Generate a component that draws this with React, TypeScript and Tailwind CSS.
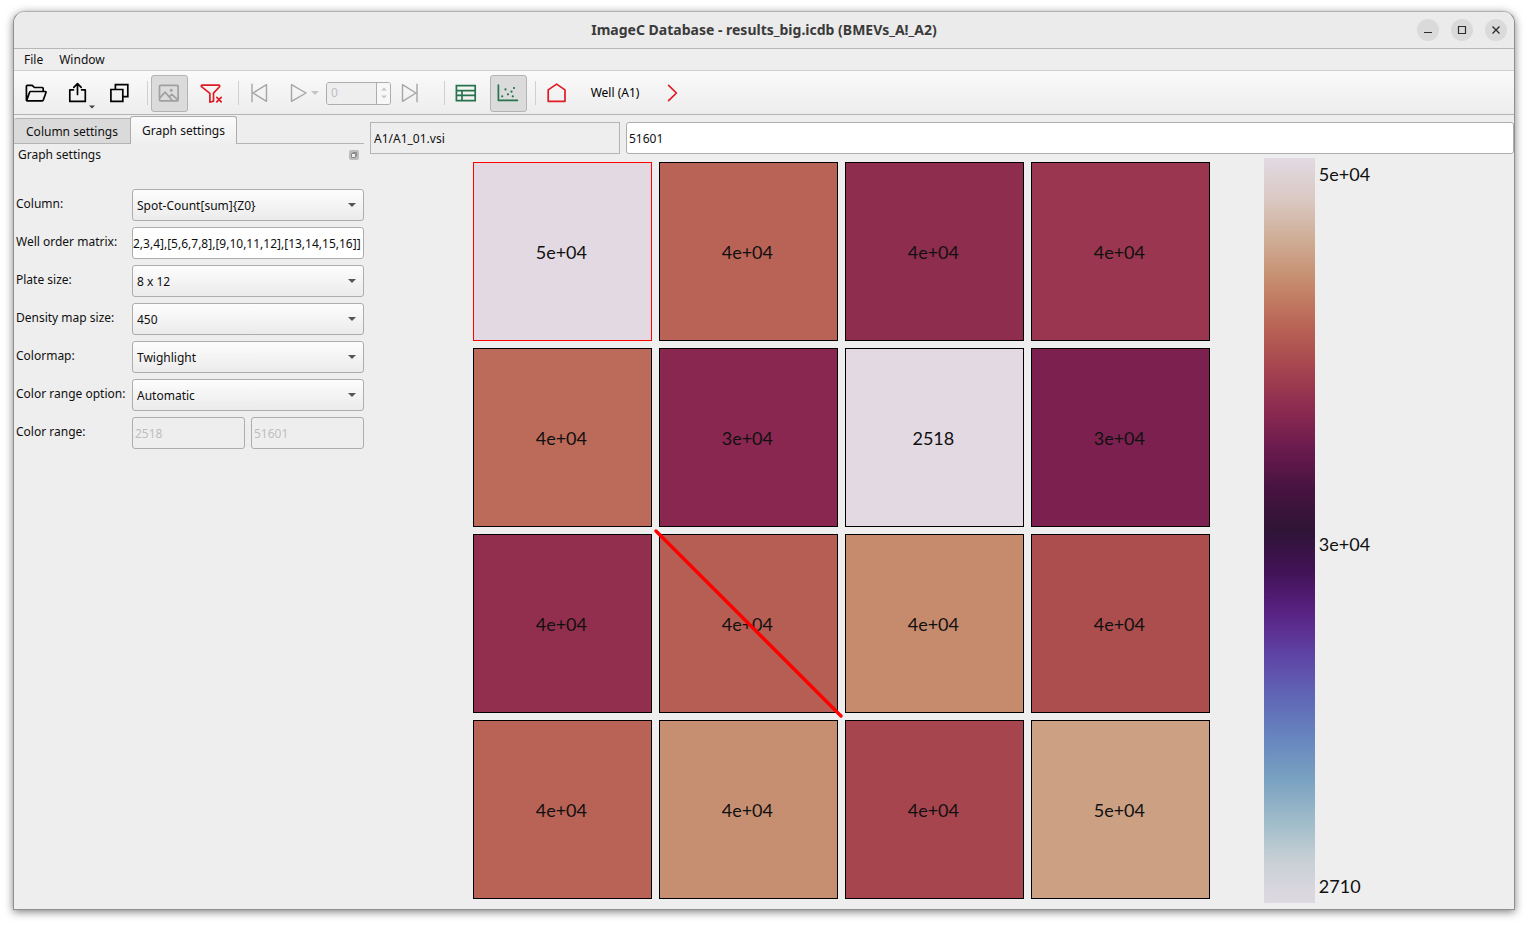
import React, { useEffect, useRef, useState } from 'react';

type Well = { value: string; color: string; selected?: boolean; excluded?: boolean };

const wells: Well[] = [
  { value: '5e+04', color: '#e2d9e2', selected: true },
  { value: '4e+04', color: '#b96256' },
  { value: '4e+04', color: '#8f2d4f' },
  { value: '4e+04', color: '#9a364f' },
  { value: '4e+04', color: '#bc6a59' },
  { value: '3e+04', color: '#892751' },
  { value: '2518', color: '#e2d9e2' },
  { value: '3e+04', color: '#7c204f' },
  { value: '4e+04', color: '#922f4f' },
  { value: '4e+04', color: '#b65e53', excluded: true },
  { value: '4e+04', color: '#c68a6d' },
  { value: '4e+04', color: '#ac4d4e' },
  { value: '4e+04', color: '#b96256' },
  { value: '4e+04', color: '#c68f71' },
  { value: '4e+04', color: '#a7454f' },
  { value: '5e+04', color: '#cba083' },
];

const twilight = [
  '#e2d9e2', '#dac9c3', '#ceac94', '#c68b6d', '#ba6657', '#a8474f', '#8e2c50', '#6b1b4e', '#471340',
  '#2f1436', '#421257', '#592384', '#5e43a5', '#6066b6', '#6785be', '#79a1c1', '#9ebbc9', '#c8d0d6', '#dfd9e1',
];

function Icon({ children }: { children: React.ReactNode }) {
  return (
    <svg
      viewBox="0 0 24 24"
      className="size-6 shrink-0"
      fill="none"
      stroke="currentColor"
      strokeWidth="1.7"
      strokeLinecap="round"
      strokeLinejoin="round"
      aria-hidden="true"
    >
      {children}
    </svg>
  );
}

function Caret({ className = '' }: { className?: string }) {
  return (
    <svg viewBox="0 0 8 4" className={`h-1 w-2 shrink-0 ${className}`} fill="currentColor" aria-hidden="true">
      <path d="M0 0h8L4 4z" />
    </svg>
  );
}

function ToolButton({
  label, active, disabled, className = '', children,
}: { label: string; active?: boolean; disabled?: boolean; className?: string; children: React.ReactNode }) {
  return (
    <button
      type="button"
      aria-label={label}
      disabled={disabled}
      className={`relative flex size-[37px] items-center justify-center rounded-[3px] border pr-[1px] pb-[1px] ${
        active ? 'border-[#b4b4b4] bg-[#dbdbdb]' : 'border-transparent'
      } ${className}`}
    >
      {children}
    </button>
  );
}

function Toolbar() {
  const group = 'flex items-center gap-[5px]';
  const next = `${group} ml-2 before:-mr-[2px] before:h-6 before:w-px before:bg-[#d0d0d0]`;
  return (
    <div className="flex h-11 items-center border-b border-[#b4b4b4] bg-linear-to-b from-[#fafafa] to-[#ededed] pt-[1px] pl-1 text-black">
      <div className={group}>
        <ToolButton label="Open">
          <Icon>
            <path d="M2.4 19V5.3a1 1 0 0 1 1-1h4.8l2.2 2.2h7.8a1 1 0 0 1 1 1v2.8M2.6 19.6l3-8.3a1.2 1.2 0 0 1 1.1-.8h14.6a.7.7 0 0 1 .7 1l-2.7 7.5a1.2 1.2 0 0 1-1.1.8H3.1" />
          </Icon>
        </ToolButton>
        <ToolButton label="Export">
          <Icon>
            <path d="M7.5 8.8H3.8v11.6h15.5V8.8h-3.7M11.5 13.5V2.8M7.8 6.3l3.7-3.6 3.7 3.6" />
          </Icon>
          <Caret className="absolute right-[1px] bottom-[2px] w-[6px] text-[#404040]" />
        </ToolButton>
        <ToolButton label="Windows">
          <Icon>
            <path strokeLinejoin="miter" d="M7.4 8.5V3.6h12.4v12h-4.9M2.9 8.5h11.9v11.9H2.9z" />
          </Icon>
        </ToolButton>
      </div>
      <div className={next}>
        <ToolButton label="Show image" active disabled className="text-[#a0a0a0]">
          <Icon>
            <rect x="2.5" y="4.4" width="18.6" height="15.4" rx=".8" />
            <path d="m2.8 16.8 5.4-5.6 7 8.2M12.2 15.8l2.6-2.4 5.8 5.2" />
            <circle cx="14.2" cy="9.2" r=".7" />
          </Icon>
        </ToolButton>
        <ToolButton label="Clear filter" className="text-[#e01b24]">
          <Icon>
            <path d="M3.2 4.2h16.6a.9.9 0 0 1 .7 1.5l-6 6.5v8l-3.6.9V12.3L2.5 5.7a.9.9 0 0 1 .7-1.5zM17.8 16.4l4.4 4.4M22.2 16.4l-4.4 4.4" />
          </Icon>
        </ToolButton>
      </div>
      <div className={next}>
        <ToolButton label="First" disabled className="text-[#a6a6a6]">
          <Icon>
            <path strokeWidth="1.4" d="M4 3.2v17.6M18.5 3.7v16.6L5 12z" />
          </Icon>
        </ToolButton>
        <ToolButton label="Play" disabled className="gap-[1px] text-[#a6a6a6]">
          <Icon>
            <path strokeWidth="1.4" d="M5.5 3.7v16.6L20 12z" />
          </Icon>
          <Caret className="text-[#c4c4c4]" />
        </ToolButton>
        <div className="flex h-[23px] w-[65px] overflow-hidden rounded-[3px] border border-[#adadad]">
          <input
            aria-label="Frame"
            disabled
            defaultValue="0"
            className="min-w-0 flex-1 border-r border-[#adadad] bg-[#eeeeee] px-1 text-[12px] text-[#bebebe]"
          />
          <div className="flex w-[13px] flex-col items-center justify-center gap-1 bg-[#f7f7f7] text-[#c8c8c8]">
            <Caret className="w-[6px] rotate-180" />
            <Caret className="w-[6px]" />
          </div>
        </div>
        <ToolButton label="Last" disabled className="-ml-1 text-[#a6a6a6]">
          <Icon>
            <path strokeWidth="1.4" d="M19 3.2v17.6M4.5 3.7v16.6L18 12z" />
          </Icon>
        </ToolButton>
      </div>
      <div className={`${next} pl-[7px]`}>
        <ToolButton label="Table view" className="text-[#26734d]">
          <Icon>
            <path strokeLinejoin="miter" d="M2.4 4.7h18.8v15H2.4zM2.4 9.6h18.8M2.4 14.4h18.8M8 9.6v10" />
          </Icon>
        </ToolButton>
        <ToolButton label="Graph view" active className="text-[#26734d]">
          <Icon>
            <path d="M2.4 4v15.4h19" />
            <g fill="currentColor" stroke="none">
              <circle cx="6.2" cy="15.3" r="1.1" />
              <circle cx="9.5" cy="8.4" r="1.1" />
              <circle cx="12" cy="13.3" r="1.1" />
              <circle cx="15.5" cy="10.7" r="1.1" />
              <circle cx="18" cy="7" r="1.1" />
              <circle cx="16.8" cy="15.3" r="1.1" />
            </g>
          </Icon>
        </ToolButton>
      </div>
      <div className={next}>
        <ToolButton label="Home" className="text-[#e01b24]">
          <Icon>
            <path d="M3.2 8.9 11.6 3.1 20 8.9v11.4H3.2z" />
          </Icon>
        </ToolButton>
        <button type="button" className="h-[37px] w-[68px] text-center whitespace-nowrap">Well (A1)</button>
        <ToolButton label="Next" className="text-[#e01b24]">
          <Icon>
            <path d="m8.6 4.4 7.8 7.6-7.8 7.6" />
          </Icon>
        </ToolButton>
      </div>
    </div>
  );
}

const fieldBox = 'h-8 w-full rounded-[3px] border border-[#adadad] pt-[1px]';

function Row({ id, label, children }: { id: string; label: string; children: React.ReactNode }) {
  return (
    <div className="flex h-8">
      <label htmlFor={id} className="w-[116px] shrink-0 pt-[5px] leading-5 whitespace-nowrap">{label}</label>
      <div className="relative flex min-w-0 flex-1 gap-[6px]">{children}</div>
    </div>
  );
}

function Combo({ id, label, value }: { id: string; label: string; value: string }) {
  return (
    <Row id={id} label={label}>
      <select id={id} className={`${fieldBox} appearance-none bg-linear-to-b from-[#fdfdfd] to-[#ebebeb] pl-1`}>
        <option>{value}</option>
      </select>
      <Caret className="pointer-events-none absolute top-[14px] right-2 text-[#555555]" />
    </Row>
  );
}

function GraphSettings() {
  const matrix = useRef<HTMLInputElement>(null);
  useEffect(() => {
    if (matrix.current) matrix.current.scrollLeft = matrix.current.scrollWidth;
  }, []);
  return (
    <aside className="w-[350px] shrink-0">
      <div role="tablist" className="flex h-7 items-end">
        <button type="button" role="tab" aria-selected="false" className="h-[26px] w-[116px] shrink-0 rounded-tl-[3px] border-t border-b border-[#b4b4b4] bg-[#dadada] pt-[1px]">
          Column settings
        </button>
        <button type="button" role="tab" aria-selected="true" className="h-7 w-[107px] shrink-0 rounded-t-[3px] border border-b-0 border-[#adadad] bg-linear-to-b from-[#fbfbfb] to-[#efefef]">
          Graph settings
        </button>
        <div className="h-full flex-1 border-b border-[#b4b4b4]" />
      </div>
      <div className="flex h-[22px] items-center justify-between pr-[5px] pl-1">
        <span>Graph settings</span>
        <button type="button" aria-label="Detach panel" className="size-[10px] rounded-[2px] bg-[#bdbdbd]">
          <svg viewBox="0 0 10 10" className="size-[10px]" fill="#eeeeee" stroke="#8a8a8a" aria-hidden="true">
            <path d="M3.5 2.5h4v4M2.5 3.5h4v4h-4z" />
          </svg>
        </button>
      </div>
      <form className="mt-[23px] flex flex-col gap-[6px] pl-[2px]" onSubmit={(e) => e.preventDefault()}>
        <Combo id="column" label="Column:" value="Spot-Count[sum]{Z0}" />
        <Row id="matrix" label="Well order matrix:">
          <input
            id="matrix"
            ref={matrix}
            defaultValue="[[1,2,3,4],[5,6,7,8],[9,10,11,12],[13,14,15,16]]"
            className={`${fieldBox} bg-white pr-[2px]`}
          />
        </Row>
        <Combo id="plate" label="Plate size:" value="8 x 12" />
        <Combo id="density" label="Density map size:" value="450" />
        <Combo id="colormap" label="Colormap:" value="Twighlight" />
        <Combo id="option" label="Color range option:" value="Automatic" />
        <Row id="min" label="Color range:">
          <input id="min" disabled defaultValue="2518" className={`${fieldBox} min-w-0 px-[2px] text-[#bebebe]`} />
          <input aria-label="Color range maximum" disabled defaultValue="51601" className={`${fieldBox} min-w-0 px-[2px] text-[#bebebe]`} />
        </Row>
      </form>
    </aside>
  );
}

function WellCell({ well, onSelect, selected }: { well: Well; selected: boolean; onSelect: () => void }) {
  return (
    <button
      type="button"
      onClick={onSelect}
      style={{ backgroundColor: well.color }}
      className={`relative flex aspect-square items-center justify-center border pt-[2px] pr-[2px] ${selected ? 'border-[#ff0000]' : 'border-black'}`}
    >
      {well.value}
      {well.excluded && (
        <svg viewBox="0 0 190 190" className="pointer-events-none absolute -inset-[6px] z-10" stroke="#ff0000" strokeWidth="3.4" strokeLinecap="round" aria-hidden="true">
          <path d="M2 2l186 186" />
        </svg>
      )}
    </button>
  );
}

function Heatmap() {
  const [selected, setSelected] = useState(wells.findIndex((w) => w.selected));
  return (
    <div className="flex flex-1 justify-center gap-[54px] pt-1 pr-[41px] pb-[6px] font-[Lato,sans-serif] text-[18px] text-[#101010]">
      <div className="mt-1 grid w-full max-w-[737px] grid-cols-4 content-start gap-[7px]">
        {wells.map((well, i) => (
          <WellCell key={i} well={well} selected={i === selected} onSelect={() => setSelected(i)} />
        ))}
      </div>
      <div className="flex gap-1">
        <div className="w-[51px]" style={{ backgroundImage: `linear-gradient(${twilight.join(',')})` }} />
        <div className="flex flex-col justify-between pt-1 pb-[5px] leading-6">
          <span>5e+04</span>
          <span className="pt-7">3e+04</span>
          <span>2710</span>
        </div>
      </div>
    </div>
  );
}

function WindowButton({ label, children }: { label: string; children: React.ReactNode }) {
  return (
    <button type="button" aria-label={label} className="flex size-[22px] items-center justify-center rounded-full bg-[#dadada] text-[#2e2e2e]">
      <svg viewBox="0 0 10 10" className="size-[10px]" fill="none" stroke="currentColor" aria-hidden="true">
        {children}
      </svg>
    </button>
  );
}

export default function App() {
  return (
    <div className="flex min-h-screen bg-white pt-[11px] pr-[13px] pb-4 pl-[13px] font-['Noto_Sans','Open_Sans',sans-serif] text-[12px] text-[#101010]">
      <div className="flex min-w-0 flex-1 flex-col overflow-hidden rounded-t-[12px] border border-[#8f8f8f] border-t-[#b0b0b0] bg-[#eeeeee] shadow-[0_2px_9px_rgba(0,0,0,0.5)]">
        <header className="grid h-[37px] grid-cols-[1fr_auto_1fr] items-center border-b border-[#b8b8b8] bg-[#ebebeb]">
          <h1 className="col-start-2 pb-[1px] text-[14px] font-bold text-[#3a3a3a]">ImageC Database - results_big.icdb (BMEVs_A!_A2)</h1>
          <div className="flex justify-end gap-3 pr-[7px]">
            <WindowButton label="Minimize"><path strokeWidth="1.2" d="M1 7.5h8" /></WindowButton>
            <WindowButton label="Maximize"><path strokeWidth="1.2" d="M1.5 1.5h7v7h-7z" /></WindowButton>
            <WindowButton label="Close"><path strokeWidth="1.4" d="m1.5 1.5 7 7m0-7-7 7" /></WindowButton>
          </div>
        </header>
        <nav className="flex h-[22px] items-center gap-4 border-b border-[#d0d0d0] pl-[10px]">
          <button type="button">File</button>
          <button type="button">Window</button>
        </nav>
        <Toolbar />
        <div className="flex flex-1 gap-[6px] pt-[1px]">
          <GraphSettings />
          <main className="flex min-w-0 flex-1 flex-col pt-[6px]">
            <div className="flex h-8 gap-[6px]">
              <input aria-label="Image" readOnly defaultValue="A1/A1_01.vsi" className="w-[250px] border border-[#b4b4b4] bg-[#eeeeee] px-[3px] pt-[1px]" />
              <input aria-label="Value" defaultValue="51601" className="min-w-0 flex-1 rounded-[3px] border border-[#adadad] bg-white px-[2px] pt-[1px]" />
            </div>
            <Heatmap />
          </main>
        </div>
      </div>
    </div>
  );
}
